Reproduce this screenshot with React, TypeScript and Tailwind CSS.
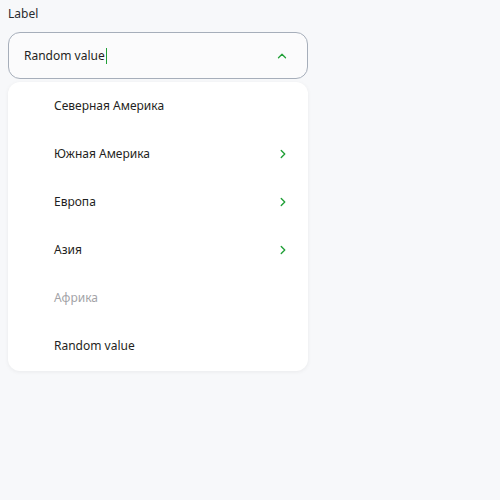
import { ChevronRight, ChevronUp } from "lucide-react";

const ITEMS = [
  { label: "Северная Америка", arrow: false, disabled: false },
  { label: "Южная Америка", arrow: true, disabled: false },
  { label: "Европа", arrow: true, disabled: false },
  { label: "Азия", arrow: true, disabled: false },
  { label: "Африка", arrow: false, disabled: true },
  { label: "Random value", arrow: false, disabled: false },
];

export default function App() {
  return (
    <div className="min-h-[500px] w-[500px] bg-[#f7f8fa] px-2 pt-[5px] font-['Noto_Sans',sans-serif] text-[#1f1f22]">
      <div className="w-[300px]">
        <p className="text-[12px] leading-[18px] text-[#2b2b2e]">Label</p>
        <div className="mt-[9px] flex h-[47px] items-center justify-between rounded-[12px] border border-[#a6aeba] bg-[#fbfbfc] pl-[15px] pr-[18px]">
          <span className="flex items-center text-[12px]">
            Random value
            <span className="ml-px inline-block h-[16px] w-px bg-[#21a038]" />
          </span>
          <ChevronUp className="h-[14px] w-[14px] text-[#21a038]" strokeWidth={2.2} />
        </div>
        <ul className="mt-[3px] rounded-[12px] bg-white pb-[1px] shadow-[0_1px_4px_rgba(0,0,0,0.06)]">
          {ITEMS.map((item) => (
            <li
              key={item.label}
              className="flex h-[48px] items-center justify-between pl-[46px] pr-[18px] text-[12px]"
            >
              <span className={item.disabled ? "text-[#a3a3a7]" : ""}>{item.label}</span>
              {item.arrow && (
                <ChevronRight className="h-[14px] w-[14px] text-[#21a038]" strokeWidth={2.4} />
              )}
            </li>
          ))}
        </ul>
      </div>
    </div>
  );
}
